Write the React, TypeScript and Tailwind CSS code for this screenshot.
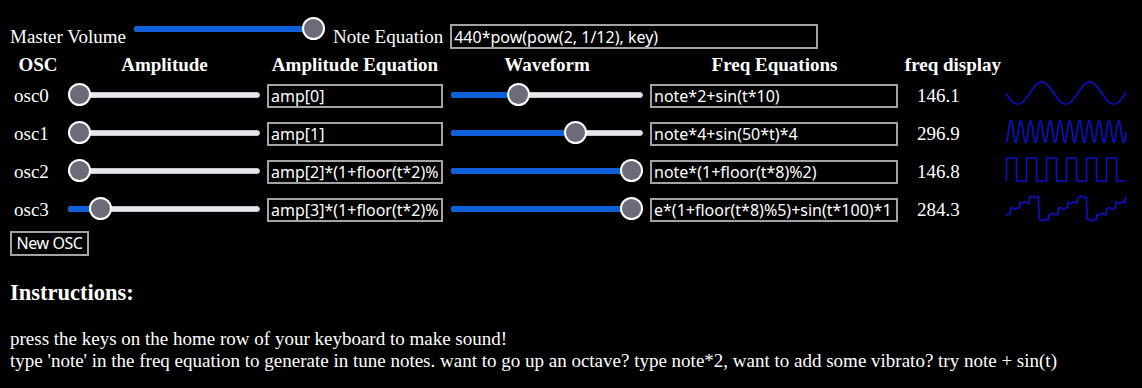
import React from 'react';

const serif = { fontFamily: '"Liberation Serif", "Times New Roman", serif' };

interface SliderProps {
  value: number;
  width: number;
  className?: string;
}

// range input look: blue fill, light track, grey knob with white ring
function Slider({ value, width, className = '' }: SliderProps) {
  const pos = 11.5 + value * (width - 23);
  return (
    <div className={`relative h-[23px] shrink-0 ${className}`} style={{ width }}>
      <div className="absolute left-0 right-0 top-[9px] h-[6px] rounded-full bg-[#e6e6eb] border border-[#c4c4cc]" />
      <div className="absolute left-0 top-[9px] h-[6px] rounded-full bg-[#0f5fd9]" style={{ width: pos }} />
      <div
        className="absolute top-0 w-[23px] h-[23px] rounded-full bg-[#6b6b79] border-2 border-white"
        style={{ left: pos - 11.5 }}
      />
    </div>
  );
}

function EqInput({ value, className = '' }: { value: string; className?: string }) {
  return (
    <input
      readOnly
      value={value}
      className={`h-[24px] shrink-0 bg-black text-white border-2 border-[#a3a3a3] px-[2px] text-[16px] outline-none font-['Noto_Sans',sans-serif] ${className}`}
    />
  );
}

// waveform plots as drawn on the canvas
function wavePoints(kind: number) {
  const pts: string[] = [];
  if (kind === 2) {
    let hi = true;
    pts.push('0.5,25');
    for (let x = 0.5; x < 120; x += 10) {
      const y = hi ? 2 : 25;
      pts.push(`${x},${y}`);
      pts.push(`${Math.min(x + 10, 119.5)},${y}`);
      hi = !hi;
    }
    return pts.join(' ');
  }
  for (let x = 0; x <= 120; x += 0.5) {
    let y = 0;
    if (kind === 0) y = 13 - 11 * Math.cos((2 * Math.PI * (x - 35.7)) / 48);
    if (kind === 1) y = 13.5 + 11 * Math.cos((2 * Math.PI * x) / 9.8);
    if (kind === 3) {
      const k = (((Math.floor((x - 33) / 9.6)) % 5) + 5) % 5;
      y = 26 - k * 5.75 + 0.8 * Math.sin(x * 0.9);
    }
    pts.push(`${x},${y.toFixed(2)}`);
  }
  return pts.join(' ');
}

function Wave({ kind }: { kind: number }) {
  return (
    <svg width="120" height="30" viewBox="0 0 120 30" className="self-start mt-[3px] ml-[2px] overflow-visible">
      <polyline points={wavePoints(kind)} fill="none" stroke="#0a12c8" strokeWidth="1.6" strokeLinejoin="round" />
    </svg>
  );
}

const oscs = [
  { name: 'osc0', amp: 0, ampEq: 'amp[0]', wave: 0.33, freqEq: 'note*2+sin(t*10)', freq: '146.1' },
  { name: 'osc1', amp: 0, ampEq: 'amp[1]', wave: 0.666, freqEq: 'note*4+sin(50*t)*4', freq: '296.9' },
  { name: 'osc2', amp: 0, ampEq: 'amp[2]*(1+floor(t*2)%2)', wave: 1, freqEq: 'note*(1+floor(t*8)%2)', freq: '146.8' },
  { name: 'osc3', amp: 0.127, ampEq: 'amp[3]*(1+floor(t*2)%3)', wave: 1, freqEq: 'e*(1+floor(t*8)%5)+sin(t*100)*1', freq: '284.3' },
];

export default function App() {
  return (
    <div className="w-[1142px] h-[388px] bg-black text-white text-[19px] overflow-hidden" style={serif}>
      {/* master controls */}
      <div className="flex items-center h-[25px] mt-[24px] pl-[10px]">
        <span className="leading-[20px]">Master Volume</span>
        <Slider value={1} width={191} className="ml-[8px] -mt-[16px]" />
        <span className="ml-[8px] leading-[20px]">Note Equation</span>
        <EqInput value="440*pow(pow(2, 1/12), key)" className="ml-[7px] w-[368px] h-[25px]" />
      </div>

      {/* header */}
      <div className="flex h-[28px] pt-[6px] pl-[10px] font-bold leading-[20px]">
        <div className="w-[56px] text-center">OSC</div>
        <div className="w-[197px] text-center">Amplitude</div>
        <div className="w-[184px] text-center">Amplitude Equation</div>
        <div className="w-[200px] text-center">Waveform</div>
        <div className="w-[255px] text-center">Freq Equations</div>
        <div className="w-[102px] text-center">freq display</div>
      </div>

      {oscs.map((o, i) => (
        <div key={o.name} className="flex items-center h-[38px] pl-[10px]">
          <div className="w-[56px] pl-[4px]">{o.name}</div>
          <div className="w-[197px] self-start mt-[6px]">
            <Slider value={o.amp} width={192} className="ml-[2px]" />
          </div>
          <div className="w-[184px]">
            <EqInput value={o.ampEq} className="ml-[4px] w-[176px]" />
          </div>
          <div className="w-[200px] self-start mt-[6px]">
            <Slider value={o.wave} width={192} className="ml-[4px]" />
          </div>
          <div className="w-[255px]">
            <EqInput value={o.freqEq} className="ml-[3px] w-[248px]" />
          </div>
          <div className="w-[102px] pl-[15px]">{o.freq}</div>
          <Wave kind={i} />
        </div>
      ))}

      <div className="pl-[10px]">
        <button className="h-[25px] w-[79px] border-2 border-[#a3a3a3] leading-[20px] text-[16px] tracking-[-0.4px] font-['Noto_Sans',sans-serif] text-white bg-black">
          New OSC
        </button>
      </div>

      <h3 className="mt-[22px] pl-[10px] text-[22.5px] font-bold leading-[25px]">Instructions:</h3>
      <div className="mt-[23px] pl-[10px] leading-[22px]">
        <div>press the keys on the home row of your keyboard to make sound!</div>
        <div>
          type 'note' in the freq equation to generate in tune notes. want to go up an octave? type note*2, want to add
          some vibrato? try note + sin(t)
        </div>
      </div>
    </div>
  );
}
